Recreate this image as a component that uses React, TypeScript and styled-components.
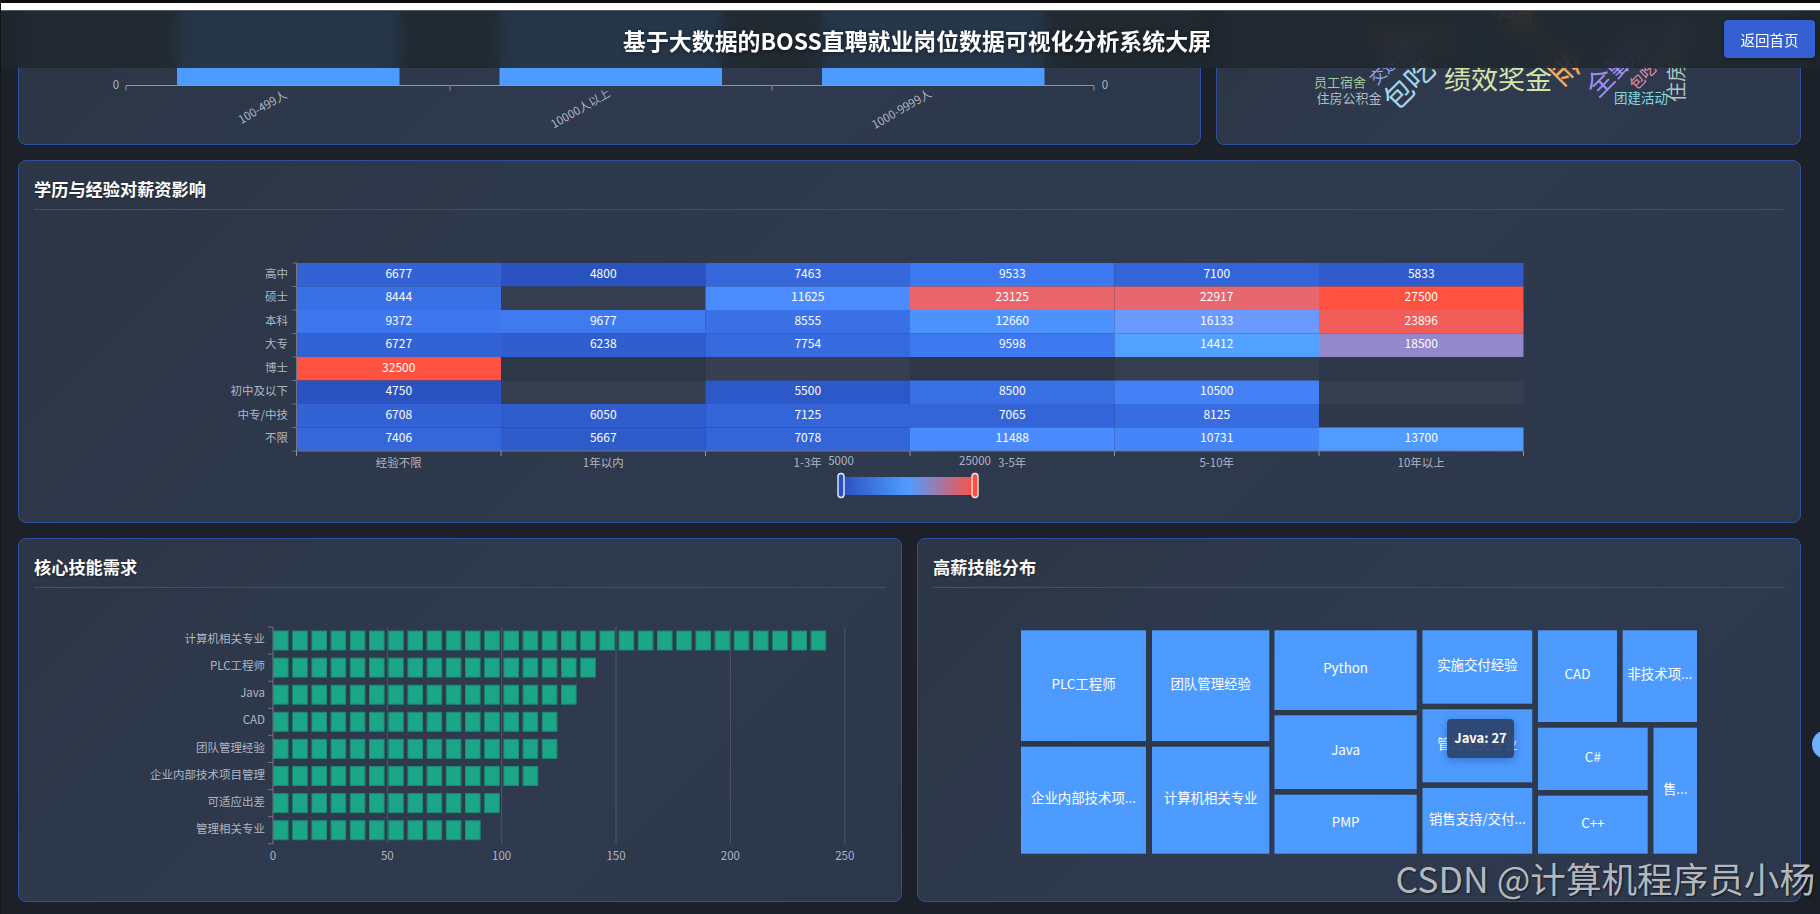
import React from "react";
import styled, { createGlobalStyle } from "styled-components";

const FONT = '"Noto Sans CJK SC", "Noto Sans", "Liberation Sans", sans-serif';

const Global = createGlobalStyle`
  html, body { margin: 0; padding: 0; background: #1b2029; }
  body { font-family: ${FONT}; color: #fff; }
`;

const Page = styled.div`
  position: relative;
  width: 1820px;
  height: 914px;
  box-sizing: border-box;
  overflow: hidden;
  background: #1b2029;
  border-left: 1px solid #12161c;
`;

const BrowserEdge = styled.div`
  height: 11px;
  box-sizing: border-box;
  background: #fff;
  border-top: 3px solid #0c0c0c;
  border-bottom: 1px solid #555a60;
`;

const Header = styled.header`
  position: absolute;
  top: 11px;
  left: 0;
  right: 0;
  z-index: 5;
  height: 57px;
  box-sizing: border-box;
  padding-left: 13px;
  display: flex;
  align-items: center;
  justify-content: center;
  background: rgba(32, 38, 44, 0.86);
  backdrop-filter: blur(10px);
`;

const Title = styled.h1`
  margin: 1px 0 0;
  font-size: 22.9px;
  line-height: 1;
  font-weight: 700;
  color: #fff;
  text-shadow: 0 1px 4px rgba(0, 0, 0, 0.5);
`;

const BackButton = styled.button`
  position: absolute;
  top: 9px;
  right: 5px;
  width: 91px;
  height: 38px;
  border: 0;
  border-radius: 4px;
  background: #3560d2;
  color: #fff;
  font-family: ${FONT};
  font-size: 14.5px;
  box-shadow: 0 1px 4px rgba(0, 0, 0, 0.35);
`;

const Content = styled.main`
  display: flex;
  flex-direction: column;
  gap: 14.5px;
  padding: 0 19px 0 17px;
`;

const TopRow = styled.section`
  display: grid;
  grid-template-columns: 1fr 585px;
  gap: 15px;
  height: 134px;
`;

const HalfRow = styled.section`
  display: grid;
  grid-template-columns: 1fr 1fr;
  gap: 15px;
  height: 364.5px;
`;

const Card = styled.article<{ $clipped?: boolean; $height?: number }>`
  position: relative;
  box-sizing: border-box;
  display: flex;
  flex-direction: column;
  min-width: 0;
  ${(p) => (p.$height ? `height: ${p.$height}px;` : "")}
  padding: ${(p) => (p.$clipped ? "0" : "15px")};
  overflow: hidden;
  border: 1px solid #2e50a4;
  border-radius: 8px;
  background: linear-gradient(135deg, #2c3646 0%, #2f3a4f 55%, #2c374a 100%);
`;

const CardTitle = styled.h2`
  margin: 0;
  padding-bottom: 8px;
  font-size: 17.2px;
  line-height: 25px;
  font-weight: 700;
  color: #fff;
  border-bottom: 1px solid #2e50a4;
  text-shadow: 0 1px 2px rgba(0, 0, 0, 0.4);
`;

const ChartArea = styled.div`
  position: relative;
`;

const PlotSvg = styled.svg`
  display: block;
  font-family: ${FONT};
`;

const Tip = styled.div`
  position: absolute;
  left: 514px;
  top: 131px;
  width: 67px;
  height: 39px;
  display: flex;
  align-items: center;
  justify-content: center;
  border-radius: 4px;
  background: rgba(44, 67, 108, 0.93);
  box-shadow: 0 2px 10px rgba(30, 60, 130, 0.45);
  color: #fff;
  font-size: 13px;
  font-weight: 700;
  line-height: 1;
  padding-bottom: 2px;
  box-sizing: border-box;
`;

const Watermark = styled.div`
  position: absolute;
  right: 5px;
  top: 856px;
  z-index: 6;
  font-size: 35.6px;
  line-height: 44px;
  white-space: nowrap;
  font-weight: 400;
  color: rgba(190, 194, 199, 0.95);
  text-shadow: 1px 1px 2px rgba(0, 0, 0, 0.55);
`;

const EdgeDot = styled.div`
  position: absolute;
  left: 1811px;
  top: 730px;
  width: 29px;
  height: 29px;
  border-radius: 50%;
  background: #6cb0ff;
`;

type Box = [number, number, number, number];

const Plot: React.FC<{ box: Box; children: React.ReactNode }> = ({ box, children }) => (
  <PlotSvg width={box[2]} height={box[3]} viewBox={box.join(" ")}>
    {children}
  </PlotSvg>
);

const AXIS = "#6e7585";
const LABEL = "#aeb6c3";

const VolumeChart = () => {
  const ticks = [125, 449, 771, 1093];
  const bars = [
    { x: 176, label: "100-499人", lx: 262, ly: 108 },
    { x: 498.5, label: "10000人以上", lx: 580, ly: 109.5 },
    { x: 821, label: "1000-9999人", lx: 901, ly: 110 },
  ];
  return (
    <Plot box={[18, 12, 1181, 132]}>
      {bars.map((b) => (
        <rect key={b.x} x={b.x} y={12} width={222.5} height={73.5} fill="#4e9bff" />
      ))}
      <line x1={125} x2={1093} y1={85.5} y2={85.5} stroke="#8d95a3" />
      {ticks.map((t) => (
        <line key={t} x1={t} x2={t} y1={85.5} y2={90.5} stroke="#8d95a3" />
      ))}
      <text x={115} y={89} fontSize={11.5} fill={LABEL} textAnchor="middle">0</text>
      <text x={1104} y={89} fontSize={11.5} fill={LABEL} textAnchor="middle">0</text>
      {bars.map((b) => (
        <text
          key={b.label}
          x={b.lx}
          y={b.ly}
          fontSize={11.5}
          fill={LABEL}
          textAnchor="middle"
          dominantBaseline="middle"
          transform={`rotate(-30 ${b.lx} ${b.ly})`}
        >
          {b.label}
        </text>
      ))}
    </Plot>
  );
};

const CLOUD = [
  { t: "员工宿舍", x: 1339, y: 83, s: 13, c: "#a3c9a0", r: 0 },
  { t: "住房公积金", x: 1348, y: 99, s: 13, c: "#aebcc4", r: 0 },
  { t: "交通补贴", x: 1395, y: 60, s: 16, c: "#9aa8ee", r: -45 },
  { t: "包吃", x: 1410, y: 86, s: 29, c: "#a6d6e0", r: -45 },
  { t: "绩效奖金", x: 1497, y: 82, s: 27, c: "#d4e4a8", r: 0 },
  { t: "五险一金", x: 1526, y: 33, s: 34, c: "#f0a85a", r: 45 },
  { t: "全勤奖", x: 1620, y: 65, s: 27, c: "#9f8fef", r: -45 },
  { t: "包吃住", x: 1648, y: 72, s: 15, c: "#e98fa8", r: -45 },
  { t: "住房补贴", x: 1678, y: 62, s: 20, c: "#aec8c2", r: -90 },
  { t: "团建活动", x: 1640, y: 99, s: 13.5, c: "#7fd8e0", r: 0 },
  { t: "带薪年假", x: 1410, y: 40, s: 22, c: "#c98a6a", r: 0 },
];

const WordCloud = () => (
  <Plot box={[1216, 12, 583, 132]}>
    {CLOUD.map((w) => (
      <text
        key={w.t}
        x={w.x}
        y={w.y}
        fontSize={w.s}
        fill={w.c}
        textAnchor="middle"
        dominantBaseline="middle"
        transform={w.r ? `rotate(${w.r} ${w.x} ${w.y})` : undefined}
      >
        {w.t}
      </text>
    ))}
  </Plot>
);

const EXP = ["经验不限", "1年以内", "1-3年", "3-5年", "5-10年", "10年以上"];
const EDU: [string, (number | null)[]][] = [
  ["高中", [6677, 4800, 7463, 9533, 7100, 5833]],
  ["硕士", [8444, null, 11625, 23125, 22917, 27500]],
  ["本科", [9372, 9677, 8555, 12660, 16133, 23896]],
  ["大专", [6727, 6238, 7754, 9598, 14412, 18500]],
  ["博士", [32500, null, null, null, null, null]],
  ["初中及以下", [4750, null, 5500, 8500, 10500, null]],
  ["中专/中技", [6708, 6050, 7125, 7065, 8125, null]],
  ["不限", [7406, 5667, 7078, 11488, 10731, 13700]],
];

const STOPS: [number, number, number, number][] = [
  [4700, 42, 82, 192],
  [9500, 62, 120, 240],
  [11625, 74, 140, 255],
  [14400, 82, 160, 255],
  [16133, 106, 154, 255],
  [18500, 148, 136, 204],
  [23000, 232, 102, 110],
  [25000, 255, 82, 64],
];

const heatColor = (v: number) => {
  if (v >= 25000) return "rgb(255,82,64)";
  for (let i = 1; i < STOPS.length; i++) {
    if (v <= STOPS[i][0]) {
      const a = STOPS[i - 1];
      const b = STOPS[i];
      const t = (v - a[0]) / (b[0] - a[0]);
      const m = (k: number) => Math.round(a[k] + (b[k] - a[k]) * t);
      return `rgb(${m(1)},${m(2)},${m(3)})`;
    }
  }
  return "rgb(42,82,192)";
};

const HeatMap = () => {
  const x0 = 296.5;
  const y0 = 263;
  const cw = 204.5;
  const rh = 23.5;
  return (
    <Plot box={[34, 210, 1751, 297]}>
      <defs>
        <linearGradient id="legend" x1="0" x2="1" y1="0" y2="0">
          <stop offset="0" stopColor="#2a50bd" />
          <stop offset="0.5" stopColor="#4f9dff" />
          <stop offset="1" stopColor="#ff5040" />
        </linearGradient>
      </defs>
      {EDU.map(([name, row], r) =>
        row.map((v, c) => {
          const light = (c + (7 - r)) % 2 === 1;
          return (
            <g key={`${r}-${c}`}>
              <rect
                x={x0 + c * cw}
                y={y0 + r * rh}
                width={cw}
                height={rh}
                fill={v === null ? (light ? "#353f4f" : "#2d3747") : heatColor(v)}
              />
              {v !== null && (
                <text
                  x={x0 + (c + 0.5) * cw}
                  y={y0 + (r + 0.5) * rh - 0.5}
                  fontSize={12}
                  fill="#fff"
                  textAnchor="middle"
                  dominantBaseline="middle"
                >
                  {v}
                </text>
              )}
            </g>
          );
        })
      )}
      <line x1={x0} x2={x0} y1={y0} y2={y0 + 8 * rh} stroke={AXIS} />
      <line x1={x0} x2={x0 + 6 * cw} y1={y0 + 8 * rh} y2={y0 + 8 * rh} stroke={AXIS} />
      {Array.from({ length: 9 }, (_, i) => (
        <line key={i} x1={x0 - 4} x2={x0} y1={y0 + i * rh} y2={y0 + i * rh} stroke={AXIS} />
      ))}
      {Array.from({ length: 7 }, (_, i) => (
        <line key={i} x1={x0 + i * cw} x2={x0 + i * cw} y1={y0 + 8 * rh} y2={y0 + 8 * rh + 5} stroke="#8d95a3" />
      ))}
      {EDU.map(([name], r) => (
        <text
          key={name}
          x={288}
          y={y0 + (r + 0.5) * rh}
          fontSize={11.5}
          fill={LABEL}
          textAnchor="end"
          dominantBaseline="middle"
        >
          {name}
        </text>
      ))}
      {EXP.map((name, c) => (
        <text
          key={name}
          x={x0 + (c + 0.5) * cw}
          y={464}
          fontSize={11.5}
          fill={LABEL}
          textAnchor="middle"
          dominantBaseline="middle"
        >
          {name}
        </text>
      ))}
      <text x={841} y={462} fontSize={11.5} fill={LABEL} textAnchor="middle" dominantBaseline="middle">5000</text>
      <text x={975} y={462} fontSize={11.5} fill={LABEL} textAnchor="middle" dominantBaseline="middle">25000</text>
      <rect x={841} y={477} width={134} height={18} fill="url(#legend)" />
      <rect x={838} y={473.5} width={6} height={24} rx={3} fill="#2a50bd" stroke="#e8eefb" strokeWidth={1.4} />
      <rect x={972} y={473.5} width={6} height={24} rx={3} fill="#ff5040" stroke="#f6e6e4" strokeWidth={1.4} />
    </Plot>
  );
};

const SKILLS: [string, number][] = [
  ["计算机相关专业", 29],
  ["PLC工程师", 17],
  ["Java", 16],
  ["CAD", 15],
  ["团队管理经验", 15],
  ["企业内部技术项目管理", 14],
  ["可适应出差", 12],
  ["管理相关专业", 11],
];

const SkillBars = () => {
  const x0 = 273;
  const y0 = 627;
  const rh = 27.1;
  const grid = [0, 50, 100, 150, 200, 250];
  return (
    <Plot box={[34, 588, 852, 298]}>
      {grid.map((g) => {
        const x = x0 + g * 2.287;
        return (
          <g key={g}>
            {g > 0 && <line x1={x} x2={x} y1={y0} y2={y0 + 8 * rh} stroke="#4d5768" />}
            <text x={x} y={857} fontSize={11.5} fill={LABEL} textAnchor="middle" dominantBaseline="middle">
              {g}
            </text>
          </g>
        );
      })}
      {SKILLS.map(([name, n], r) => (
        <g key={name}>
          {Array.from({ length: n }, (_, i) => (
            <rect
              key={i}
              x={x0 + i * 19.2 + 0.5}
              y={y0 + r * rh + 4}
              width={14.6}
              height={19}
              fill="#1ca688"
              stroke="#198a74"
            />
          ))}
          <text
            x={265}
            y={y0 + (r + 0.5) * rh - 0.5}
            fontSize={11.5}
            fill={LABEL}
            textAnchor="end"
            dominantBaseline="middle"
          >
            {name}
          </text>
        </g>
      ))}
      <line x1={x0} x2={x0} y1={y0} y2={y0 + 8 * rh} stroke={AXIS} />
      {Array.from({ length: 9 }, (_, i) => (
        <line key={i} x1={x0 - 5} x2={x0} y1={y0 + i * rh} y2={y0 + i * rh} stroke={AXIS} />
      ))}
    </Plot>
  );
};

const TREE: [string, number, number, number, number][] = [
  ["PLC工程师", 1021, 631.3, 1146, 742],
  ["团队管理经验", 1152, 631.3, 1269.3, 742],
  ["企业内部技术项...", 1021, 747.7, 1146, 854.7],
  ["计算机相关专业", 1152, 747.7, 1269.3, 854.7],
  ["Python", 1274.5, 631.3, 1416.7, 711],
  ["Java", 1274.5, 716.3, 1416.7, 790],
  ["PMP", 1274.5, 795.7, 1416.7, 854.7],
  ["实施交付经验", 1422.5, 631.3, 1532.2, 704.7],
  ["管理相关专业", 1422.5, 710.3, 1532.2, 783.3],
  ["销售支持/交付...", 1422.5, 789, 1532.2, 854.7],
  ["CAD", 1538, 631.3, 1617, 723],
  ["非技术项...", 1622.7, 631.3, 1697, 723],
  ["C#", 1538, 728.7, 1647.7, 791],
  ["C++", 1538, 796.7, 1647.7, 854.7],
  ["售...", 1653.5, 728.7, 1697, 854.7],
];

const TreeMap = () => (
  <Plot box={[933, 589, 852, 297]}>
    {TREE.map(([name, a, b, c, d]) => (
      <g key={name}>
        <rect x={a} y={b} width={c - a} height={d - b} fill="#4e9bff" />
        <text
          x={(a + c) / 2}
          y={(b + d) / 2 - 0.5}
          fontSize={13.4}
          fill="#fff"
          textAnchor="middle"
          dominantBaseline="middle"
        >
          {name}
        </text>
      </g>
    ))}
  </Plot>
);

export default function App() {
  return (
    <Page>
      <Global />
      <BrowserEdge />
      <Header>
        <Title>基于大数据的BOSS直聘就业岗位数据可视化分析系统大屏</Title>
        <BackButton>返回首页</BackButton>
      </Header>
      <Content>
        <TopRow>
          <Card $clipped>
            <VolumeChart />
          </Card>
          <Card $clipped>
            <WordCloud />
          </Card>
        </TopRow>
        <Card $height={363.5}>
          <CardTitle>学历与经验对薪资影响</CardTitle>
          <ChartArea>
            <HeatMap />
          </ChartArea>
        </Card>
        <HalfRow>
          <Card>
            <CardTitle>核心技能需求</CardTitle>
            <ChartArea>
              <SkillBars />
            </ChartArea>
          </Card>
          <Card>
            <CardTitle>高薪技能分布</CardTitle>
            <ChartArea>
              <TreeMap />
              <Tip>Java: 27</Tip>
            </ChartArea>
          </Card>
        </HalfRow>
      </Content>
      <EdgeDot />
      <Watermark>CSDN @计算机程序员小杨</Watermark>
    </Page>
  );
}
